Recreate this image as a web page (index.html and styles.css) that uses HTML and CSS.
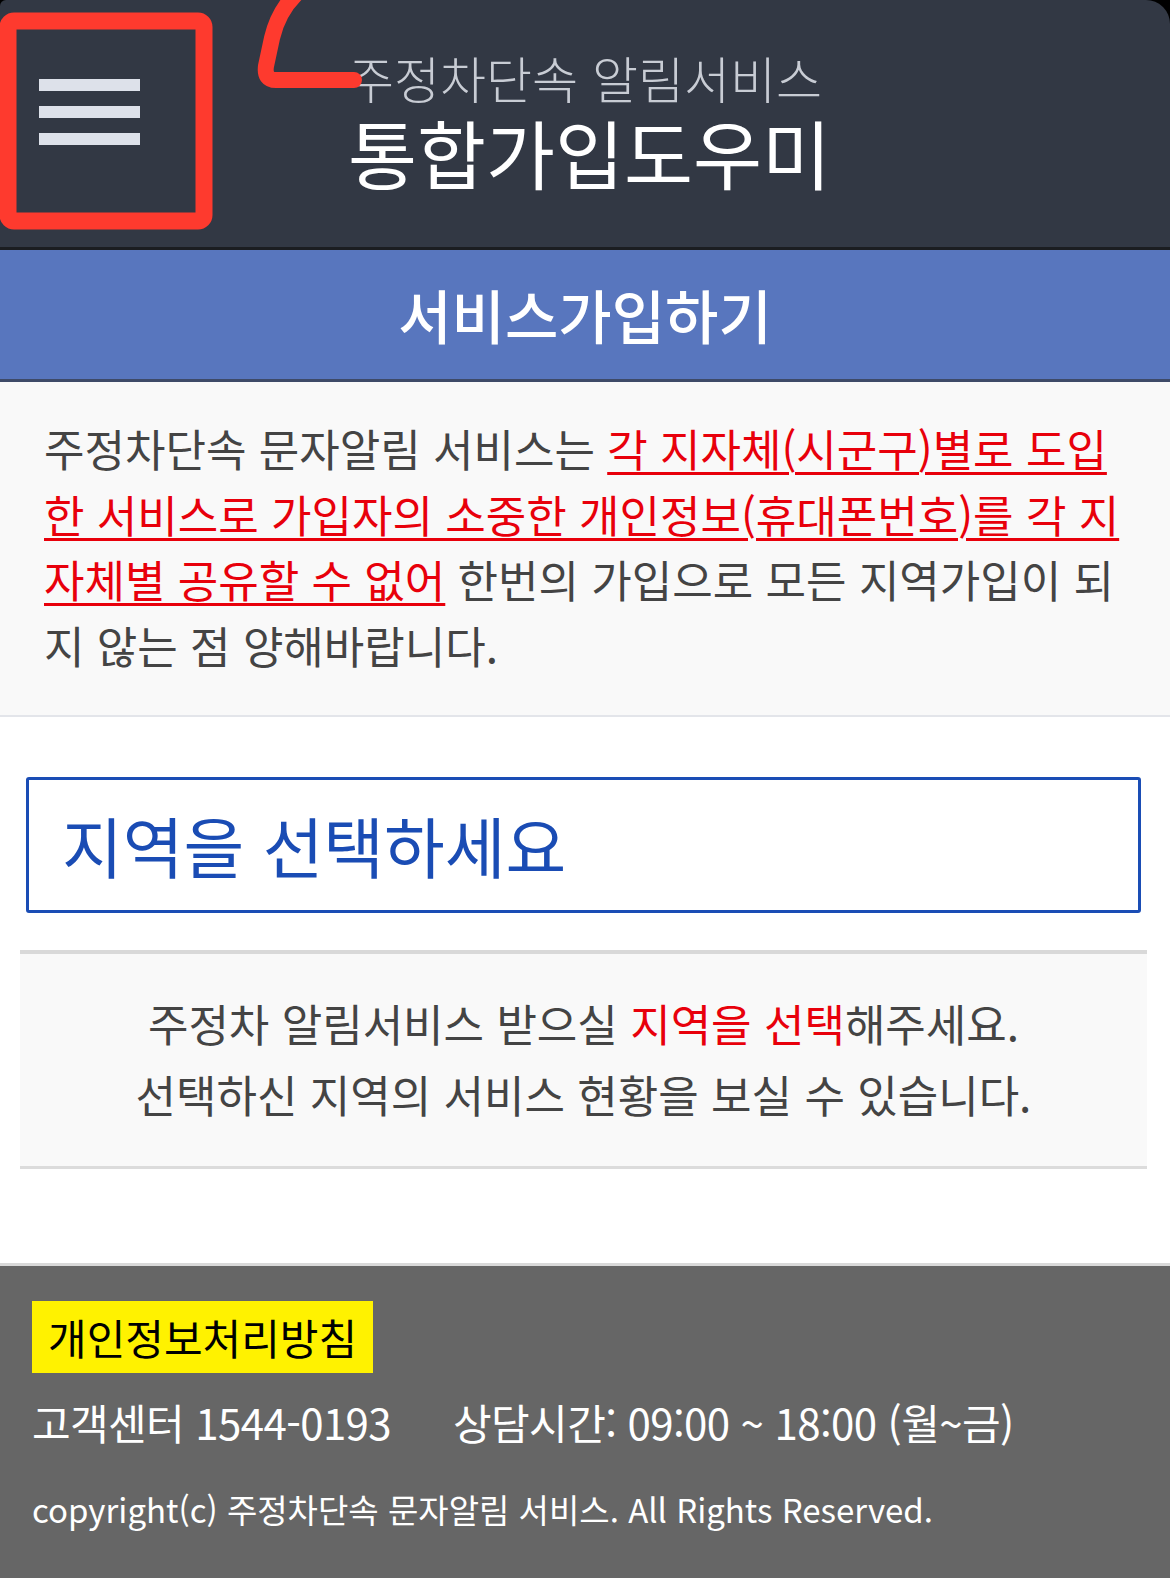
FILE: index.html
```html
<!DOCTYPE html>
<html lang="ko">
<head>
  <meta charset="UTF-8">
  <meta name="viewport" content="width=device-width, initial-scale=1.0">
  <title>주정차단속 알림서비스 통합가입도우미</title>
  <link rel="stylesheet" href="styles.css">
</head>
<body>

  <div class="top-wrap">
    <header class="top">
      <button class="menu-btn" type="button" aria-label="메뉴">
        <span></span>
        <span></span>
        <span></span>
      </button>
      <div class="brand">
        <p class="brand-sub">주정차단속 알림서비스</p>
        <h1 class="brand-title">통합가입도우미</h1>
      </div>
    </header>
    <!-- red marker drawn over the screenshot -->
    <svg class="marker" width="380" height="240" viewBox="0 0 380 240">
      <rect x="8" y="21" width="196" height="200" rx="6" fill="none" stroke="#fe3a2e" stroke-width="17"/>
      <path d="M354 80 L276 80 Q264 80 266 66 L272 38 Q278 12 296 -6" fill="none" stroke="#fe3a2e" stroke-width="16" stroke-linecap="round" stroke-linejoin="round"/>
    </svg>
  </div>

  <h2 class="page-title">서비스가입하기</h2>

  <section class="intro">
    <p>주정차단속 문자알림 서비스는 <u class="warn">각 지자체(시군구)별로 도입한 서비스로 가입자의 소중한 개인정보(휴대폰번호)를 각 지자체별 공유할 수 없어</u> 한번의 가입으로 모든 지역가입이 되지 않는 점 양해바랍니다.</p>
  </section>

  <div class="area-select">지역을 선택하세요</div>

  <div class="notice">
    <p>주정차 알림서비스 받으실 <span class="hl">지역을 선택</span>해주세요.</p>
    <p>선택하신 지역의 서비스 현황을 보실 수 있습니다.</p>
  </div>

  <footer class="foot">
    <a class="privacy" href="#">개인정보처리방침</a>
    <p class="contact"><span>고객센터 1544-0193</span><span>상담시간: 09:00 ~ 18:00 (월~금)</span></p>
    <p class="copy">copyright(c) 주정차단속 문자알림 서비스. All Rights Reserved.</p>
  </footer>

</body>
</html>
```

FILE: styles.css
```css
* {
  box-sizing: border-box;
}

body {
  margin: 0;
  padding: 0;
  font-family: "Noto Sans CJK KR", "Noto Sans", sans-serif;
  background-color: #fff;
  color: #444;
}

p, h1, h2 {
  margin: 0;
}

/* header */
.top-wrap {
  position: relative;
  background-color: #000;
}

.top {
  display: flex;
  height: 250px;
  background-color: #323844;
  border-bottom: 3px solid #1b1d21;
  border-radius: 6px 24px 0 0;
}

.menu-btn {
  display: flex;
  flex-direction: column;
  gap: 15px;
  width: 101px;
  margin: 79px 0 0 39px;
  padding: 0;
  border: none;
  background: none;
  align-self: flex-start;
}

.menu-btn span {
  display: block;
  height: 12px;
  background-color: #dde1ea;
}

.brand {
  margin-left: 208px;
  padding-top: 47px;
}

.brand-sub {
  font-size: 50px;
  font-weight: 300;
  line-height: 60px;
  color: #c8ccd4;
}

.brand-title {
  margin-top: 4px;
  font-size: 75px;
  font-weight: 400;
  line-height: 82px;
  color: #fff;
}

.marker {
  position: absolute;
  top: 0;
  left: 0;
  pointer-events: none;
}

/* blue title bar */
.page-title {
  margin: 0;
  height: 132px;
  line-height: 129px;
  background-color: #5876be;
  border-bottom: 3px solid #3e4a68;
  color: #fff;
  font-size: 58px;
  font-weight: 500;
  text-align: center;
}

.intro {
  background-color: #f9f9f9;
  border-bottom: 2px solid #e3e5ea;
  padding: 34px 40px 37px 44px;
  font-size: 44px;
  line-height: 65.5px;
}

.warn {
  color: #e8000b;
  text-decoration-thickness: 3px;
  text-underline-offset: 5px;
}

.area-select {
  margin: 60px 29px 0 26px;
  height: 136px;
  padding-left: 33px;
  border: 3px solid #1a4db5;
  border-radius: 3px;
  color: #1a4cb4;
  font-size: 66px;
  line-height: 128px;
}

.notice {
  margin: 37px 23px 0 20px;
  padding: 34px 0 36px;
  background-color: #f9f9f9;
  border-top: 4px solid #d9d9d9;
  border-bottom: 3px solid #dcdcdc;
  font-size: 44px;
  line-height: 71px;
  text-align: center;
}

.hl {
  color: #e8000b;
}

/* footer */
.foot {
  margin-top: 94px;
  min-height: 315px;
  padding: 35px 32px 20px;
  background-color: #666;
  border-top: 3px solid #d9d9d9;
  color: #fff;
}

.privacy {
  display: inline-block;
  height: 72px;
  padding: 0 16px;
  background-color: #fff200;
  color: #000;
  font-size: 42px;
  line-height: 72px;
  text-decoration: none;
}

.contact {
  display: flex;
  gap: 62px;
  margin-top: 14px;
  font-size: 42px;
  line-height: 70px;
  letter-spacing: -0.6px;
}

.copy {
  margin-top: 22px;
  font-size: 33px;
  line-height: 60px;
}
```
